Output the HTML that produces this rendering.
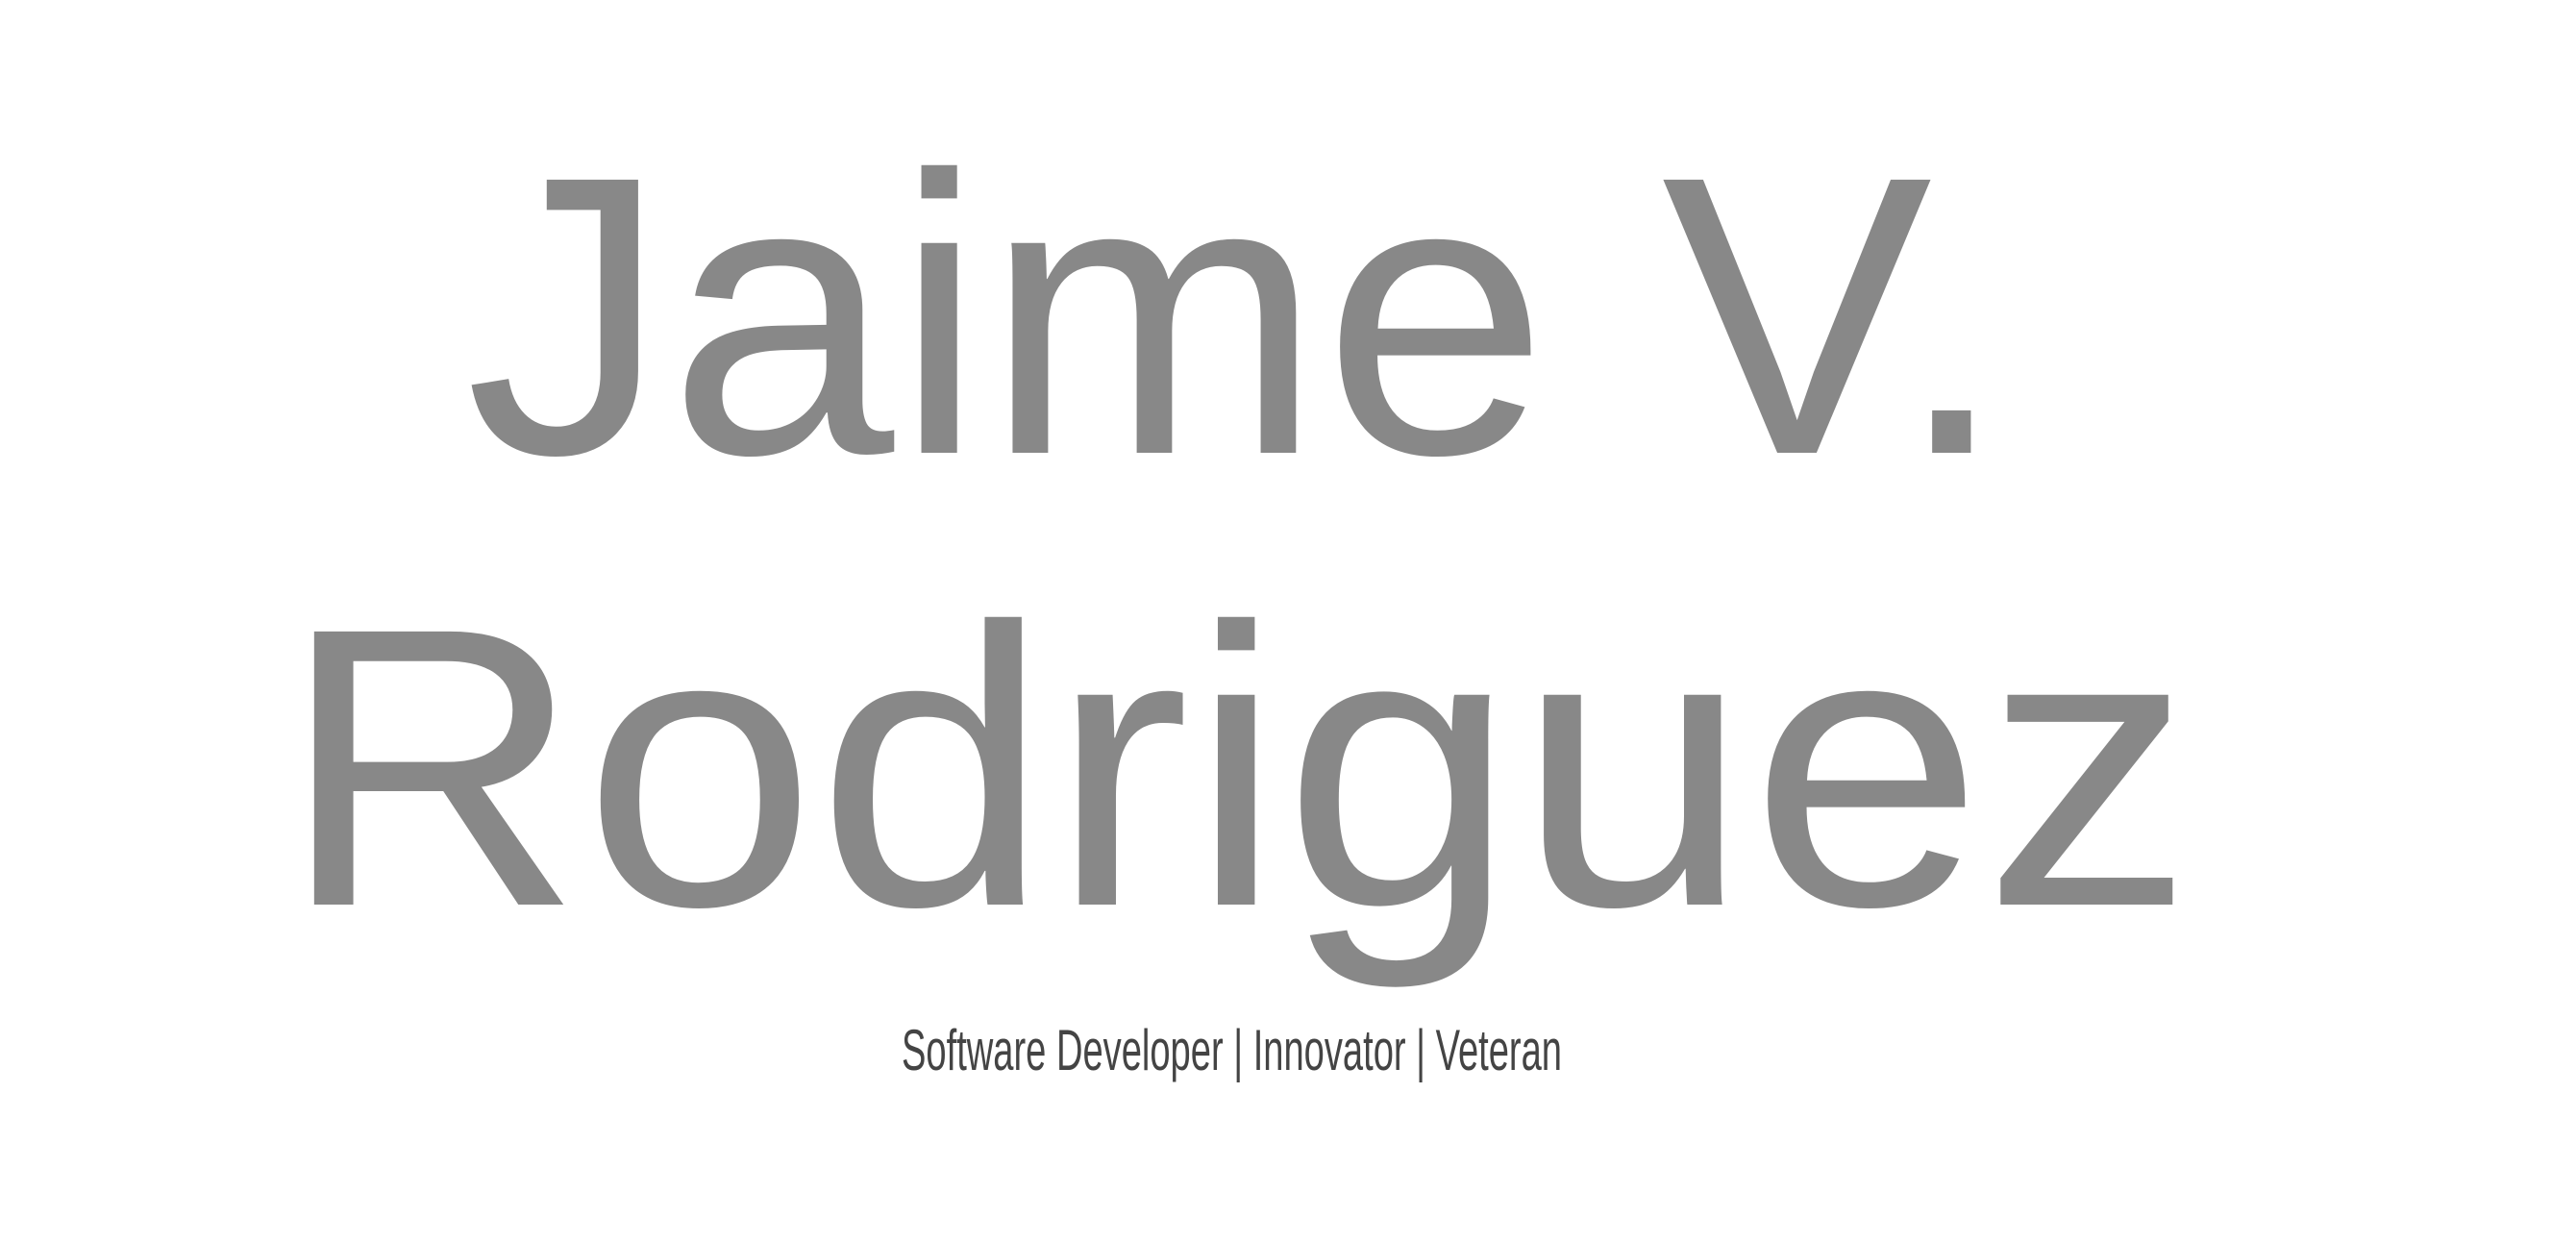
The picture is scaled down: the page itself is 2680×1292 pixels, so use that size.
<!DOCTYPE html>
<html><head><meta charset="utf-8">
<style>
html,body{margin:0;padding:0;background:#fff;width:2680px;height:1292px;overflow:hidden;position:relative}
.t{position:absolute;white-space:nowrap;font-family:"Liberation Sans",sans-serif;transform-origin:0 0}
.big{font-size:413px;line-height:413px;color:#888}
.sub{font-size:60px;line-height:60px;color:#444}
</style></head><body>
<div class="t big" id="a" data-w="1605" style="left:484px;top:122px">Jaime V.</div>
<div class="t big" id="b" data-w="1991" style="left:291px;top:592px">Rodriguez</div>
<div class="t sub" id="c" data-w="687" style="left:938px;top:1063px">Software Developer | Innovator | Veteran</div>
<script>
document.querySelectorAll('.t').forEach(function(e){
 var w=e.getBoundingClientRect().width;var tw=+e.getAttribute('data-w');
 e.style.transform='scaleX('+(tw/w)+')';
});
</script>
</body></html>
